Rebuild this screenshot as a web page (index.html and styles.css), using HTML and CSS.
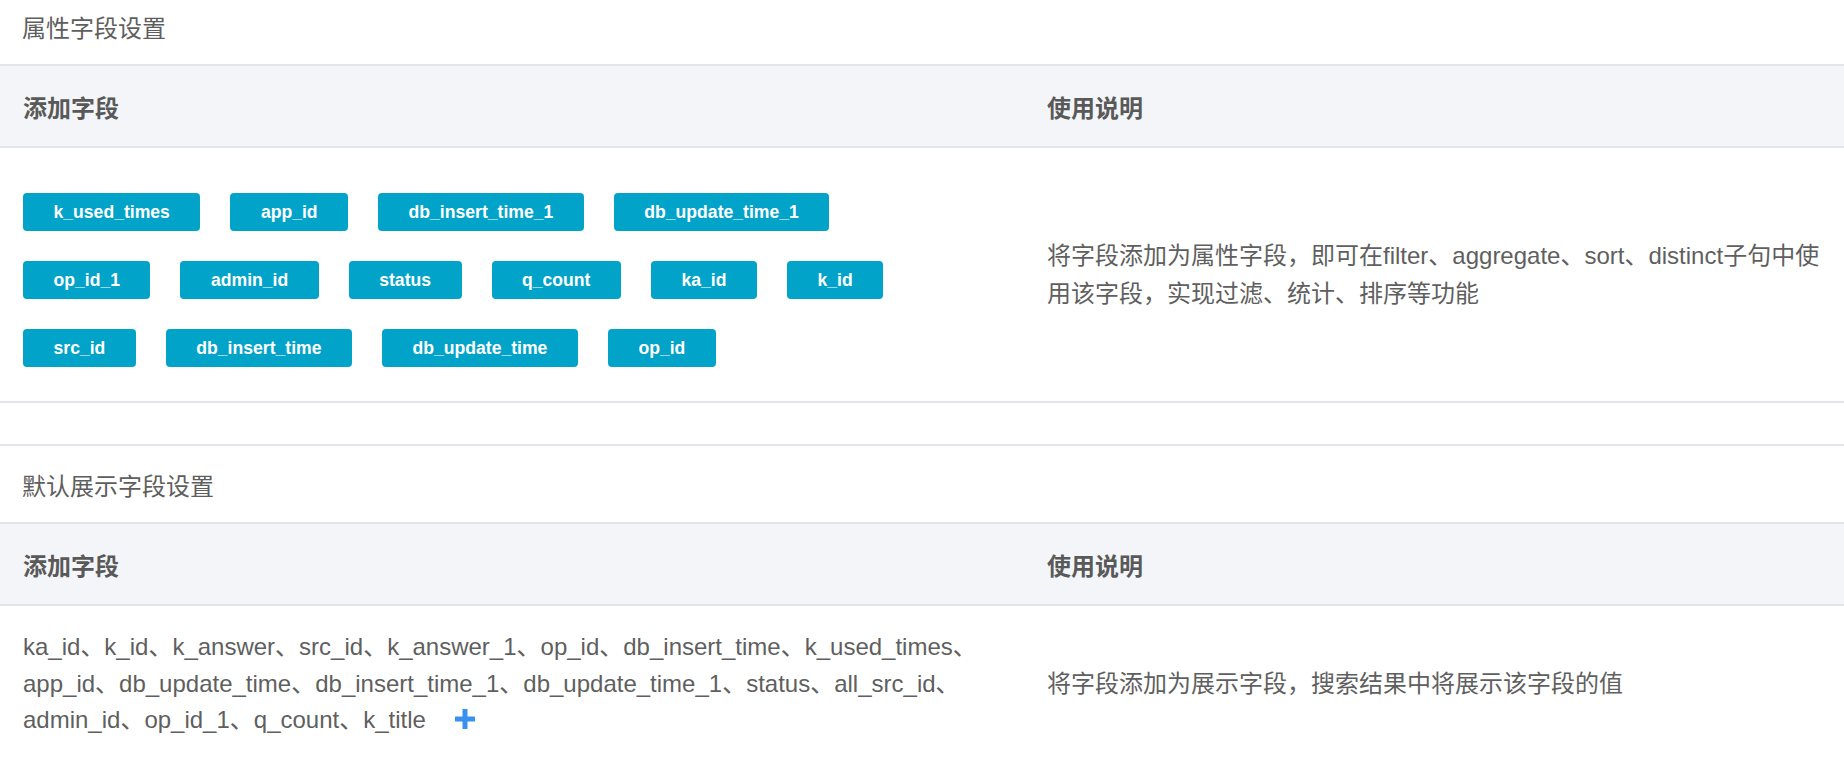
FILE: index.html
```html
<!DOCTYPE html>
<html lang="zh-CN">
<head>
<meta charset="utf-8">
<title>字段设置</title>
<link rel="stylesheet" href="styles.css">
</head>
<body>
<div class="page">
  <section class="panel panel--first">
    <h2 class="panel-title">属性字段设置</h2>
    <div class="table">
      <div class="row row--head">
        <div class="cell cell--main">添加字段</div>
        <div class="cell cell--note">使用说明</div>
      </div>
      <div class="row row--body">
        <div class="cell cell--main">
          <div class="tags">
            <span class="tag">k_used_times</span>
            <span class="tag">app_id</span>
            <span class="tag">db_insert_time_1</span>
            <span class="tag">db_update_time_1</span>
            <span class="tag">op_id_1</span>
            <span class="tag">admin_id</span>
            <span class="tag">status</span>
            <span class="tag">q_count</span>
            <span class="tag">ka_id</span>
            <span class="tag">k_id</span>
            <span class="tag">src_id</span>
            <span class="tag">db_insert_time</span>
            <span class="tag">db_update_time</span>
            <span class="tag">op_id</span>
          </div>
        </div>
        <div class="cell cell--note desc">将字段添加为属性字段，即可在filter、aggregate、sort、distinct子句中使用该字段，实现过滤、统计、排序等功能</div>
      </div>
    </div>
  </section>

  <section class="panel panel--second">
    <h2 class="panel-title">默认展示字段设置</h2>
    <div class="table">
      <div class="row row--head">
        <div class="cell cell--main">添加字段</div>
        <div class="cell cell--note">使用说明</div>
      </div>
      <div class="row row--body row--list">
        <div class="cell cell--main field-list">ka_id、k_id、k_answer、src_id、k_answer_1、op_id、db_insert_time、k_used_times、app_id、db_update_time、db_insert_time_1、db_update_time_1、status、all_src_id、admin_id、op_id_1、q_count、k_title<svg class="add-icon" width="20" height="20" viewBox="0 0 20 20" aria-hidden="true"><rect x="7.5" y="0" width="5" height="20" rx="0.5" fill="#3a90ee"/><rect x="0" y="7.5" width="20" height="5" rx="0.5" fill="#3a90ee"/></svg></div>
        <div class="cell cell--note desc">将字段添加为展示字段，搜索结果中将展示该字段的值</div>
      </div>
    </div>
  </section>
</div>
</body>
</html>
```

FILE: styles.css
```css
html, body {
  margin: 0;
  padding: 0;
  background: #ffffff;
}

body {
  font-family: "Liberation Sans", "Noto Sans CJK SC", sans-serif;
  font-size: 24px;
  color: #5f5f5f;
  overflow: hidden;
}

.page {
  width: 1844px;
}

.panel--first {
  margin-top: -12px;
  border-bottom: 2px solid #e2e6eb;
  margin-bottom: 41px;
}

.panel--second {
  border-top: 2px solid #e2e6eb;
}

.panel-title {
  margin: 0;
  height: 76px;
  padding-left: 22px;
  display: flex;
  align-items: center;
  font-size: 24px;
  font-weight: normal;
  color: #5e5e5e;
  border-bottom: 2px solid #e2e6eb;
}

.row {
  display: grid;
  grid-template-columns: 1024px 1fr;
}

.row--head {
  height: 80px;
  background: #f3f5f8;
  border-bottom: 2px solid #e2e6eb;
  font-weight: bold;
  color: #595959;
}

.cell {
  display: flex;
  align-items: center;
  padding: 0 23px;
}

.cell--note {
  padding-right: 15px;
}

.desc {
  display: block;
  align-self: center;
  line-height: 38px;
}

.tags {
  display: flex;
  flex-wrap: wrap;
  column-gap: 30px;
  row-gap: 30px;
  max-width: 920px;
  padding: 45px 0 34px;
}

.tag {
  display: inline-block;
  height: 38px;
  line-height: 38px;
  padding: 0 30.5px;
  background: #02a3c9;
  color: #ffffff;
  font-weight: bold;
  font-size: 17.6px;
  border-radius: 4px;
  white-space: nowrap;
}

.field-list {
  display: block;
  padding-top: 23px;
  padding-bottom: 23px;
  padding-right: 8px;
  line-height: 36.5px;
}

.add-icon {
  display: inline-block;
  margin-left: 29px;
  vertical-align: -1px;
}
```
